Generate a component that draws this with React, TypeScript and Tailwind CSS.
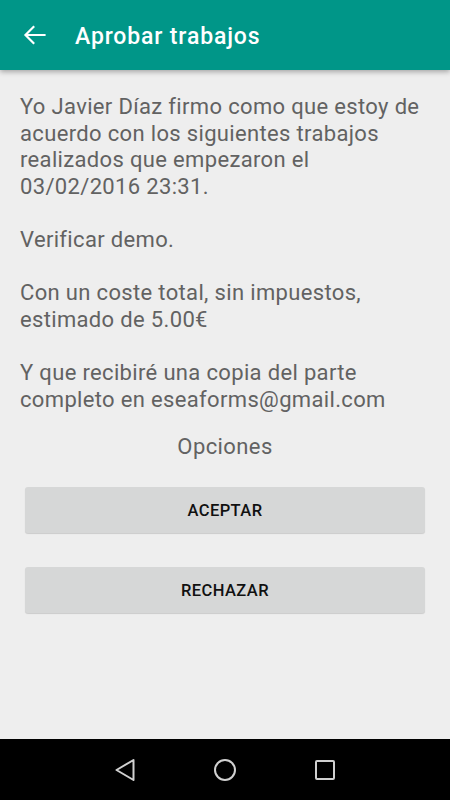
import React from "react";

export default function App() {
  return (
    <div className="w-[450px] h-[800px] flex flex-col bg-[#eeeeee] overflow-hidden" style={{ fontFamily: "Roboto, 'Noto Sans', sans-serif" }}>
      <div className="h-[70px] shrink-0 bg-[#009688] flex items-center shadow-[0_2px_5px_rgba(0,0,0,0.3)] relative z-10">
        <svg className="ml-[20px]" width="28" height="28" viewBox="0 0 24 24" fill="none">
          <path d="M21 12H5M11.5 5.2L4.7 12l6.8 6.8" stroke="white" strokeWidth="1.9" strokeLinecap="square" />
        </svg>
        <span className="ml-[27px] mt-[4px] text-white text-[23px] font-medium tracking-[0.85px]">Aprobar trabajos</span>
      </div>
      <div className="flex-1 flex flex-col px-[20px] pt-[24px]">
        <div className="text-[#626262] text-[22px] leading-[26.6px] tracking-[0.34px]">
          <p>Yo Javier Díaz firmo como que estoy de acuerdo con los siguientes trabajos realizados que empezaron el 03/02/2016 23:31.</p>
          <p className="mt-[26.6px]">Verificar demo.</p>
          <p className="mt-[26.6px]">Con un coste total, sin impuestos, estimado de 5.00€</p>
          <p className="mt-[26.6px]">Y que recibiré una copia del parte completo en eseaforms@gmail.com</p>
        </div>
        <div className="mt-[21px] text-center text-[#626262] text-[22px] leading-[26px] tracking-[0.4px]">Opciones</div>
        <div className="mt-[27px] px-[5px] flex flex-col gap-[34px]">
          <button className="h-[46px] w-full pt-[3px] bg-[#d6d7d7] rounded-[3px] shadow-[0_1px_1px_rgba(0,0,0,0.15)] text-[#111] text-[16.5px] font-medium tracking-[0.4px]">ACEPTAR</button>
          <button className="h-[46px] w-full pt-[3px] bg-[#d6d7d7] rounded-[3px] shadow-[0_1px_1px_rgba(0,0,0,0.15)] text-[#111] text-[16.5px] font-medium tracking-[0.4px]">RECHAZAR</button>
        </div>
      </div>
      <div className="h-[61px] shrink-0 bg-black flex items-center justify-center gap-[77px]">
        <svg width="22" height="24" viewBox="0 0 22 24" fill="none">
          <path d="M19.5 2 L2.5 12 L19.5 22 Z" stroke="#d0d0d0" strokeWidth="2" strokeLinejoin="round" />
        </svg>
        <svg width="24" height="24" viewBox="0 0 24 24" fill="none">
          <circle cx="12" cy="12" r="10" stroke="#d0d0d0" strokeWidth="2" />
        </svg>
        <svg width="22" height="22" viewBox="0 0 22 22" fill="none">
          <rect x="2" y="2" width="18" height="18" rx="1" stroke="#d0d0d0" strokeWidth="2" />
        </svg>
      </div>
    </div>
  );
}
